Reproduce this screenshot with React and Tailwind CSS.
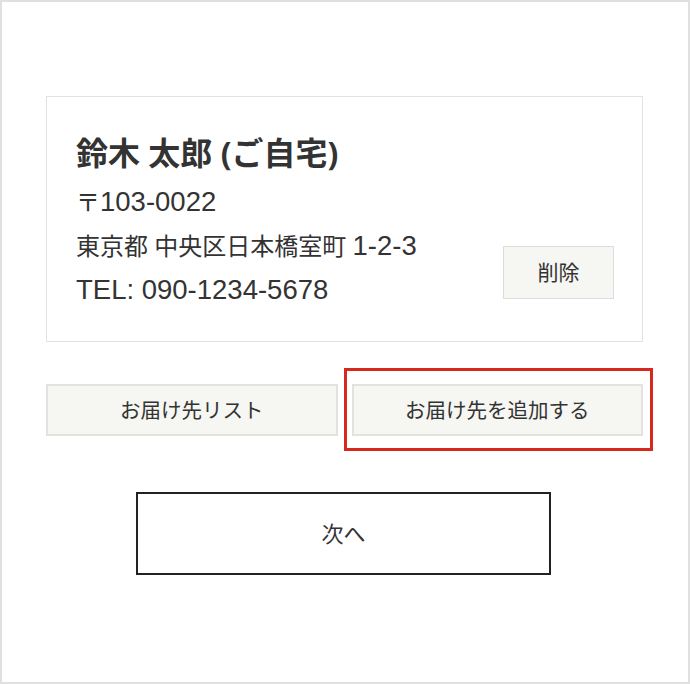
function L({ children }) {
    // latin runs sit a little larger than the kana, as in the original font
    return <span className="text-[27.5px]" style={{ fontFamily: '"Liberation Sans", sans-serif' }}>{children}</span>;
}

export default function App() {
    const font = { fontFamily: '"Noto Sans", "Noto Sans CJK JP", sans-serif' };

    return (
        <div
            className="box-border h-[684px] w-[690px] border-2 border-[#e0e0e0] bg-white pl-[44px] pr-[45px] pt-[94px] text-[#333]"
            style={font}
        >

            {/* address card */}
            <div className="flex border border-[#e2e2e2] pb-[29px] pl-[29px] pr-[28px] pt-[38px]">

                <div className="flex-1">
                    <p className="text-[32px] font-bold leading-[36px]">
                        鈴木 太郎 (ご自宅)
                    </p>
                    <div className="mt-[9px] text-[24px] leading-[44px]">
                        <p>〒<L>103-0022</L></p>
                        <p>東京都 中央区日本橋室町 <L>1-2-3</L></p>
                        <p><L>TEL: 090-1234-5678</L></p>
                    </div>
                </div>

                <div className="flex items-end pb-[13px]">
                    <button className="h-[53px] w-[111px] border border-[#dcdcdc] bg-[#f6f6f2] text-[21px]">
                        削除
                    </button>
                </div>

            </div>

            {/* actions */}
            <div className="mt-[42px] grid grid-cols-2 gap-[14px]">

                <button className="h-[52px] border-2 border-[#e2e2de] bg-[#f6f6f2] text-[20.5px]">
                    お届け先リスト
                </button>

                <div className="relative">
                    <button className="h-[52px] w-full border-2 border-[#e2e2de] bg-[#f6f6f2] text-[20.5px]">
                        お届け先を追加する
                    </button>
                    <div className="pointer-events-none absolute -bottom-[15px] -left-[8px] -right-[10px] -top-[16px] border-[3px] border-[#d7281d]" />
                </div>

            </div>

            <div className="mt-[56px] flex justify-center pr-[2px]">
                <button className="h-[83px] w-[415px] border-2 border-[#222] bg-white text-[22px]">
                    次へ
                </button>
            </div>

        </div>
    );
}
